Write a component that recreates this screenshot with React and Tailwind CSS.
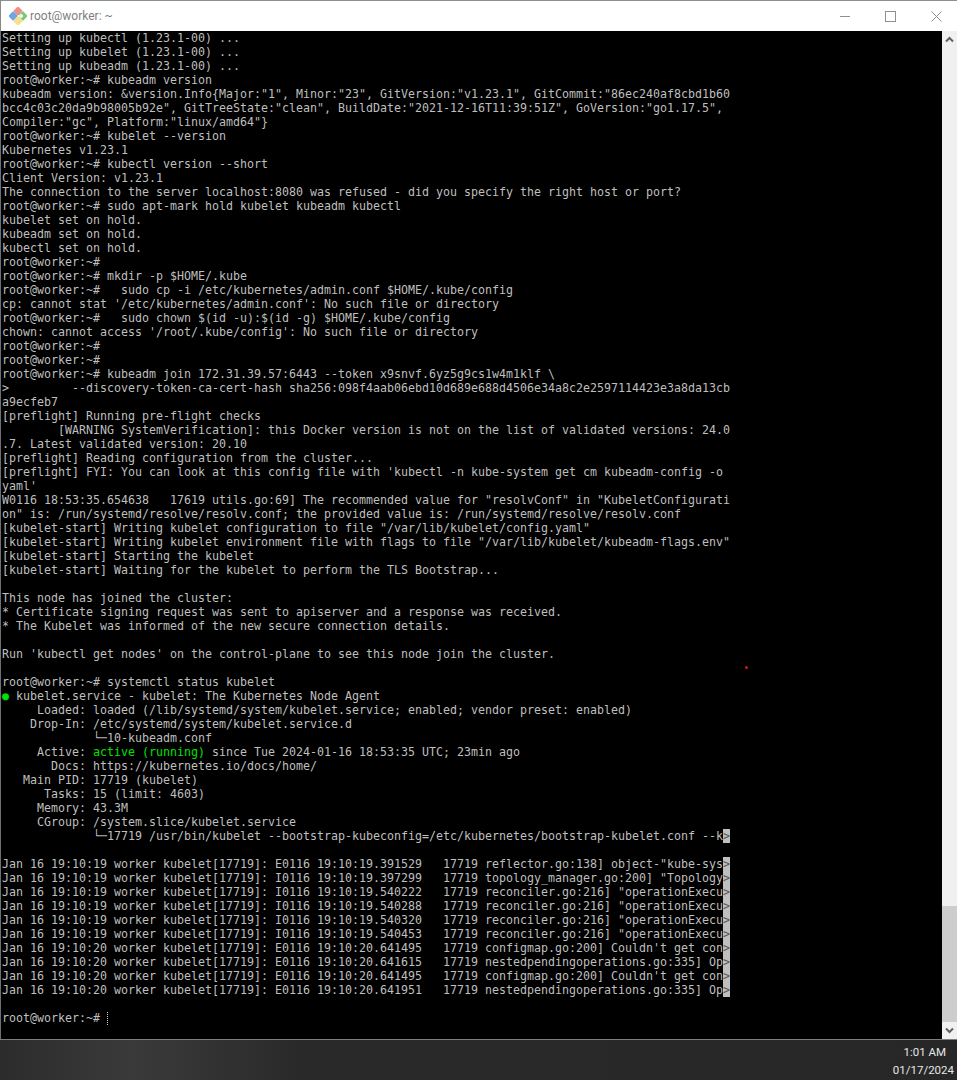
const P = "root@worker:~# ";
const lines = [
  "Setting up kubectl (1.23.1-00) ...",
  "Setting up kubelet (1.23.1-00) ...",
  "Setting up kubeadm (1.23.1-00) ...",
  P + "kubeadm version",
  'kubeadm version: &version.Info{Major:"1", Minor:"23", GitVersion:"v1.23.1", GitCommit:"86ec240af8cbd1b60',
  'bcc4c03c20da9b98005b92e", GitTreeState:"clean", BuildDate:"2021-12-16T11:39:51Z", GoVersion:"go1.17.5", ',
  'Compiler:"gc", Platform:"linux/amd64"}',
  P + "kubelet --version",
  "Kubernetes v1.23.1",
  P + "kubectl version --short",
  "Client Version: v1.23.1",
  "The connection to the server localhost:8080 was refused - did you specify the right host or port?",
  P + "sudo apt-mark hold kubelet kubeadm kubectl",
  "kubelet set on hold.",
  "kubeadm set on hold.",
  "kubectl set on hold.",
  P,
  P + "mkdir -p $HOME/.kube",
  P + "  sudo cp -i /etc/kubernetes/admin.conf $HOME/.kube/config",
  "cp: cannot stat '/etc/kubernetes/admin.conf': No such file or directory",
  P + "  sudo chown $(id -u):$(id -g) $HOME/.kube/config",
  "chown: cannot access '/root/.kube/config': No such file or directory",
  P,
  P,
  P + "kubeadm join 172.31.39.57:6443 --token x9snvf.6yz5g9cs1w4m1klf \\",
  ">         --discovery-token-ca-cert-hash sha256:098f4aab06ebd10d689e688d4506e34a8c2e2597114423e3a8da13cb",
  "a9ecfeb7",
  "[preflight] Running pre-flight checks",
  "        [WARNING SystemVerification]: this Docker version is not on the list of validated versions: 24.0",
  ".7. Latest validated version: 20.10",
  "[preflight] Reading configuration from the cluster...",
  "[preflight] FYI: You can look at this config file with 'kubectl -n kube-system get cm kubeadm-config -o",
  "yaml'",
  'W0116 18:53:35.654638   17619 utils.go:69] The recommended value for "resolvConf" in "KubeletConfigurati',
  'on" is: /run/systemd/resolve/resolv.conf; the provided value is: /run/systemd/resolve/resolv.conf',
  '[kubelet-start] Writing kubelet configuration to file "/var/lib/kubelet/config.yaml"',
  '[kubelet-start] Writing kubelet environment file with flags to file "/var/lib/kubelet/kubeadm-flags.env"',
  "[kubelet-start] Starting the kubelet",
  "[kubelet-start] Waiting for the kubelet to perform the TLS Bootstrap...",
  "",
  "This node has joined the cluster:",
  "* Certificate signing request was sent to apiserver and a response was received.",
  "* The Kubelet was informed of the new secure connection details.",
  "",
  "Run 'kubectl get nodes' on the control-plane to see this node join the cluster.",
  "",
  P + "systemctl status kubelet",
];

const logs = [
  'Jan 16 19:10:19 worker kubelet[17719]: E0116 19:10:19.391529   17719 reflector.go:138] object-"kube-sys',
  'Jan 16 19:10:19 worker kubelet[17719]: I0116 19:10:19.397299   17719 topology_manager.go:200] "Topology',
  'Jan 16 19:10:19 worker kubelet[17719]: I0116 19:10:19.540222   17719 reconciler.go:216] "operationExecu',
  'Jan 16 19:10:19 worker kubelet[17719]: I0116 19:10:19.540288   17719 reconciler.go:216] "operationExecu',
  'Jan 16 19:10:19 worker kubelet[17719]: I0116 19:10:19.540320   17719 reconciler.go:216] "operationExecu',
  'Jan 16 19:10:19 worker kubelet[17719]: I0116 19:10:19.540453   17719 reconciler.go:216] "operationExecu',
  "Jan 16 19:10:20 worker kubelet[17719]: E0116 19:10:20.641495   17719 configmap.go:200] Couldn't get con",
  "Jan 16 19:10:20 worker kubelet[17719]: E0116 19:10:20.641615   17719 nestedpendingoperations.go:335] Op",
  "Jan 16 19:10:20 worker kubelet[17719]: E0116 19:10:20.641495   17719 configmap.go:200] Couldn't get con",
  "Jan 16 19:10:20 worker kubelet[17719]: E0116 19:10:20.641951   17719 nestedpendingoperations.go:335] Op",
];

function Row({ children }) {
  return <div className="h-[14px] leading-[14px] whitespace-pre">{children}</div>;
}

function More() {
  return <span className="bg-[#bfbfbf] text-[#555555] inline-block w-[7px] h-[14px] align-top">&gt;</span>;
}

function Logo() {
  return (
    <svg width="18" height="18" viewBox="0 0 18 18" className="mr-[3px]">
      <rect x="5.5" y="0.6" width="7" height="7" rx="1" transform="rotate(45 9 4.1)" fill="#ee8f88" />
      <rect x="0.6" y="5.5" width="7" height="7" rx="1" transform="rotate(45 4.1 9)" fill="#6ea6e8" />
      <rect x="10.4" y="5.5" width="7" height="7" rx="1" transform="rotate(45 13.9 9)" fill="#7cc872" />
      <rect x="5.5" y="10.4" width="7" height="7" rx="1" transform="rotate(45 9 13.9)" fill="#f7e08a" />
      <path d="M6.5 9h4M9 7l2 2-2 2" fill="none" stroke="#ffffff" strokeWidth="1.3" transform="translate(2.5 0)" />
    </svg>
  );
}

function Arrow({ up }) {
  return (
    <div className="h-[17px] flex items-center justify-center">
      <svg width="9" height="7" viewBox="0 0 9 7">
        <path d={up ? "M1 5.5 L4.5 2 L8 5.5" : "M1 1.5 L4.5 5 L8 1.5"} fill="none" stroke="#606060" strokeWidth="2" />
      </svg>
    </div>
  );
}

export default function App() {
  return (
    <div className="w-[957px] h-[1080px] flex flex-col overflow-hidden relative bg-black" style={{ fontFamily: "'DejaVu Sans Mono', monospace" }}>
      <div className="h-[31px] shrink-0 bg-white border-t border-t-[#8a8f8f] border-l border-l-[#8a8a8a] flex items-center pl-[8px] font-['Roboto','Noto_Sans',sans-serif] text-[12px] text-[#7f7f7f]">
        <Logo />
        <span>root@worker: ~</span>
        <div className="ml-auto flex items-center">
          <svg width="11" height="11" viewBox="0 0 11 11" className="mr-[34px]"><path d="M0 5.5H10" stroke="#8f8f8f" /></svg>
          <svg width="11" height="11" viewBox="0 0 11 11" className="mr-[35px]"><rect x="0.5" y="0.5" width="10" height="10" fill="none" stroke="#8f8f8f" /></svg>
          <svg width="11" height="11" viewBox="0 0 11 11" className="mr-[15px]"><path d="M0.5 0.5L10.5 10.5M10.5 0.5L0.5 10.5" stroke="#8f8f8f" /></svg>
        </div>
      </div>

      <div className="h-[1008px] shrink-0 flex border-l border-l-[#6f6f6f]">
        <div className="flex-1 bg-black pl-px text-[#bfbfbf] text-[11.63px]">
          {lines.map((l, i) => <Row key={i}>{l}</Row>)}
          <Row><span className="text-[#00e000]">●</span> kubelet.service - kubelet: The Kubernetes Node Agent</Row>
          <Row>{"     Loaded: loaded (/lib/systemd/system/kubelet.service; enabled; vendor preset: enabled)"}</Row>
          <Row>{"    Drop-In: /etc/systemd/system/kubelet.service.d"}</Row>
          <Row>{"             └─10-kubeadm.conf"}</Row>
          <Row>{"     Active: "}<span className="text-[#00e000]">active (running)</span>{" since Tue 2024-01-16 18:53:35 UTC; 23min ago"}</Row>
          <Row>{"       Docs: https://kubernetes.io/docs/home/"}</Row>
          <Row>{"   Main PID: 17719 (kubelet)"}</Row>
          <Row>{"      Tasks: 15 (limit: 4603)"}</Row>
          <Row>{"     Memory: 43.3M"}</Row>
          <Row>{"     CGroup: /system.slice/kubelet.service"}</Row>
          <Row>{"             └─17719 /usr/bin/kubelet --bootstrap-kubeconfig=/etc/kubernetes/bootstrap-kubelet.conf --k"}<More /></Row>
          <Row />
          {logs.map((l, i) => <Row key={i}>{l}<More /></Row>)}
          <Row />
          <Row>{P}<span className="inline-block h-[13px] align-top mt-px border-l border-dotted border-l-[#d0d0d0]"></span></Row>
        </div>
        <div className="w-[15px] shrink-0 bg-[#f0f0f0] flex flex-col">
          <Arrow up />
          <div className="flex-1" />
          <div className="h-[116px] bg-[#cdcdcd]" />
          <Arrow />
        </div>
      </div>

      <div className="flex-1 border-t border-t-[#7d7d7d] bg-[linear-gradient(90deg,#2c2c2c_0%,#3a3a3a_14%,#292929_32%,#272727_100%)] flex flex-col items-end pr-[3px] font-['Roboto','Noto_Sans',sans-serif] text-[11.5px] text-[#e6e6e6]">
        <div className="h-[18px] mt-[3px] leading-[18px] pr-[8px]">1:01 AM</div>
        <div className="h-[18px] leading-[18px]">01/17/2024</div>
      </div>

      <div className="absolute left-[745px] top-[666px] w-[3px] h-[3px] rounded-full bg-[#e01010]" />
    </div>
  );
}
